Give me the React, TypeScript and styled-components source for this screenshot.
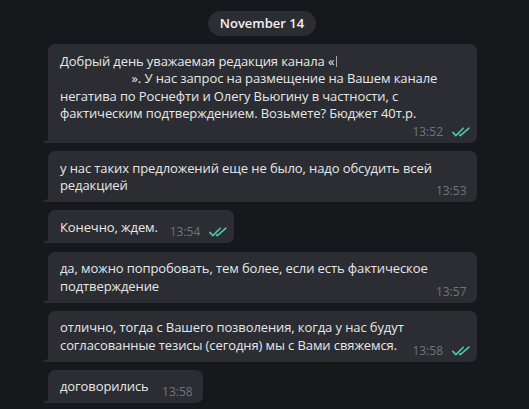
import React from "react";
import styled, { createGlobalStyle } from "styled-components";

const GlobalStyle = createGlobalStyle`
  html, body { margin: 0; padding: 0; }
  body {
    background: #17181c;
    font-family: "Open Sans", "Noto Sans", sans-serif;
    -webkit-font-smoothing: antialiased;
  }
`;

const BUBBLE = "#2b2d32";

const Chat = styled.div`
  display: flex;
  flex-direction: column;
  align-items: flex-start;
  gap: 8.4px;
  width: 429px;
  box-sizing: border-box;
  margin-left: 47.5px;
  padding-top: 11px;
`;

const DateRow = styled.div`
  align-self: center;
  margin-bottom: -0.4px;
`;

const DatePill = styled.span`
  display: inline-block;
  height: 25px;
  line-height: 25px;
  padding: 0 12px;
  border-radius: 13px;
  background: ${BUBBLE};
  color: #f2f2f2;
  font-size: 13px;
  font-weight: 600;
`;

const Bubble = styled.div`
  position: relative;
  display: grid;
  max-width: 429px;
  box-sizing: border-box;
  padding: 8.5px 12px 7px 12.5px;
  background: ${BUBBLE};
  border-radius: 7px 7px 7px 0;
  color: #e7e7e8;
  font-size: 13px;
  line-height: 17.6px;

  &::before {
    content: "";
    position: absolute;
    left: -4px;
    bottom: 0;
    width: 4px;
    height: 7px;
    background: radial-gradient(circle at 0 0, transparent 5px, ${BUBBLE} 5.6px);
  }
`;

const Text = styled.div`
  grid-area: 1 / 1;
  display: flow-root;
  overflow-wrap: break-word;
  letter-spacing: -0.1px;
`;

const Spacer = styled.span<{ $read: boolean; $ownLine?: boolean }>`
  float: ${(p) => (p.$ownLine ? "none" : "right")};
  display: block;
  width: ${(p) => (p.$ownLine ? "auto" : p.$read ? "64px" : "42px")};
  height: 13px;
`;

const Meta = styled.div<{ $read: boolean }>`
  grid-area: 1 / 1;
  align-self: end;
  justify-self: end;
  display: flex;
  align-items: center;
  gap: 9px;
  margin: 0 ${(p) => (p.$read ? -5.5 : -2)}px -3px 0;
  font-size: 12px;
  line-height: 14px;
  color: #6b7580;
`;

const RedactedMark = styled.span`
  display: inline-block;
  width: 1px;
  height: 11px;
  margin-left: 2px;
  vertical-align: -1px;
  background: #a8a8a8;
`;

const RedactedGap = styled.span<{ $w: number }>`
  display: inline-block;
  width: ${(p) => p.$w}px;
`;

const Checks = () => (
  <svg width="18" height="10" viewBox="0 0 18 10" fill="none">
    <path
      d="M0.9 5.4 L3.9 8.6 L11.2 1.2"
      stroke="#4fc79f"
      strokeWidth="1.6"
      strokeLinecap="round"
      strokeLinejoin="round"
    />
    <path
      d="M7.6 7.9 L8.4 8.6 L16.9 1.2"
      stroke="#4fc79f"
      strokeWidth="1.6"
      strokeLinecap="round"
      strokeLinejoin="round"
    />
  </svg>
);

type Msg = { time: string; read: boolean; ownLine?: boolean; body: React.ReactNode };

const messages: Msg[] = [
  {
    time: "13:52",
    read: true,
    ownLine: true,
    body: (
      <>
        Добрый день уважаемая редакция канала «<RedactedMark />
        <br />
        <RedactedGap $w={71.5} />
        ». У нас запрос на размещение на Вашем канале негатива по Роснефти и
        Олегу Вьюгину в частности, с фактическим подтверждением. Возьмете?
        Бюджет 40т.р.
      </>
    ),
  },
  {
    time: "13:53",
    read: false,
    body: "у нас таких предложений еще не было, надо обсудить всей редакцией",
  },
  { time: "13:54", read: true, body: "Конечно, ждем." },
  {
    time: "13:57",
    read: false,
    body: "да, можно попробовать, тем более, если есть фактическое подтверждение",
  },
  {
    time: "13:58",
    read: true,
    body: "отлично, тогда с Вашего позволения, когда у нас будут согласованные тезисы (сегодня) мы с Вами свяжемся.",
  },
  { time: "13:58", read: false, body: "договорились" },
];

export default function App() {
  return (
    <>
      <GlobalStyle />
      <Chat>
        <DateRow>
          <DatePill>November 14</DatePill>
        </DateRow>
        {messages.map((m, i) => (
          <Bubble key={i}>
            <Text>
              {m.body}
              <Spacer $read={m.read} $ownLine={m.ownLine} />
            </Text>
            <Meta $read={m.read}>
              <span>{m.time}</span>
              {m.read && <Checks />}
            </Meta>
          </Bubble>
        ))}
      </Chat>
    </>
  );
}
